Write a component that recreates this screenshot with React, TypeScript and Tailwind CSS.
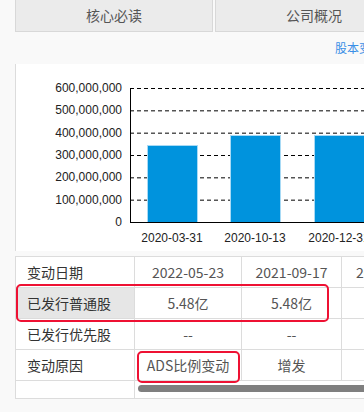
import React from "react";

const yTicks = ["600,000,000", "500,000,000", "400,000,000", "300,000,000", "200,000,000", "100,000,000", "0"];

const bars = [
  { date: "2020-03-31", x: 131, top: 81 },
  { date: "2020-10-13", x: 214, top: 71 },
  { date: "2020-12-31", x: 298, top: 71 },
];

const rows = [
  { label: "变动日期", values: ["2022-05-23", "2021-09-17", "2020-12-31"], head: true },
  { label: "已发行普通股", values: ["5.48亿", "5.48亿", "3.90亿"], mark: true },
  { label: "已发行优先股", values: ["--", "--", "--"] },
  { label: "变动原因", values: ["ADS比例变动", "增发", "回购"] },
];

function ShareChart() {
  const top = 24;
  const bottom = 158;
  const step = (bottom - top) / 6;
  return (
    <svg width="349" height="187" viewBox="0 0 349 187" className="block">
      {yTicks.map((t, i) => {
        const y = top + step * i;
        return (
          <g key={t}>
            <text x="106" y={y + 4} textAnchor="end" fontSize="12" fill="#222" fontFamily="'Liberation Sans', Arial, sans-serif">
              {t}
            </text>
            {i < 6 && <line x1="114" y1={y + 0.5} x2="349" y2={y + 0.5} stroke="#000" strokeWidth="1" strokeDasharray="4 3" />}
          </g>
        );
      })}
      {bars.map((b) => (
        <g key={b.date}>
          <rect x={b.x + 0.5} y={b.top + 0.5} width="50" height={bottom - b.top} fill="#0093dd" stroke="#a8daf5" strokeWidth="1" />
          <text x={b.x + 25} y="178" textAnchor="middle" fontSize="12" fill="#222" fontFamily="'Liberation Sans', Arial, sans-serif">
            {b.date}
          </text>
        </g>
      ))}
      <line x1="114.5" y1={top} x2="114.5" y2={bottom + 1} stroke="#000" strokeWidth="1" />
      <line x1="114" y1={bottom + 0.5} x2="349" y2={bottom + 0.5} stroke="#000" strokeWidth="1" />
    </svg>
  );
}

export default function App() {
  return (
    <div className="w-[364px] h-[412px] overflow-hidden bg-[#f9f9f9] font-['Noto_Sans_CJK_SC','Noto_Sans',sans-serif]">
      {/* tabs */}
      <div className="flex gap-[2px] pl-[15px] whitespace-nowrap">
        <div className="w-[198px] shrink-0 h-[32px] flex items-center justify-center bg-[#ebebeb] border border-t-0 border-[#d8d8d8] text-[14px] text-[#555]">
          核心必读
        </div>
        <div className="w-[198px] shrink-0 h-[32px] flex items-center justify-center bg-[#ebebeb] border border-t-0 border-[#d8d8d8] text-[14px] text-[#555]">
          公司概况
        </div>
      </div>

      <div className="h-[32px] flex items-center pl-[335px] whitespace-nowrap text-[12px] text-[#3a8ee6]">
        股本变动
      </div>

      {/* chart */}
      <div className="ml-[15px] h-[187px] border-l border-[#dcdcdc] bg-white">
        <ShareChart />
      </div>

      {/* table */}
      <div className="relative ml-[15px] mt-[5px] bg-white border-l border-t border-b border-[#dcdcdc] text-[14px]">
        {rows.map((r) => (
          <div key={r.label} className="flex h-[31px] border-b border-[#dcdcdc] whitespace-nowrap">
            <div className={`w-[119px] shrink-0 flex items-center pl-[11px] border-r border-[#dcdcdc] text-[#333] ${r.mark ? "bg-[#e6e6e6]" : ""}`}>
              {r.label}
            </div>
            <div className="w-[107px] shrink-0 flex items-center justify-center border-r border-[#dcdcdc] text-[#555]">
              {r.values[0]}
            </div>
            <div className="w-[100px] shrink-0 flex items-center justify-center border-r border-[#dcdcdc] text-[#555]">
              {r.values[1]}
            </div>
            <div className="w-[100px] shrink-0 flex items-center justify-center text-[#555]">
              {r.values[2]}
            </div>
          </div>
        ))}
        <div className="flex h-[17px]">
          <div className="w-[119px] shrink-0 border-r border-[#dcdcdc]" />
          <div className="flex-1 pt-[4px] pl-[3px]">
            <div className="h-[7px] rounded-l-full bg-[#7f7f7f]" />
          </div>
        </div>

        {/* highlight marks */}
        <div className="absolute left-[0px] top-[27px] w-[313px] h-[38px] rounded-[5px] border-2 border-[#ee1133]" />
        <div className="absolute left-[121px] top-[94px] w-[103px] h-[32px] rounded-[5px] border-2 border-[#ee1133]" />
      </div>
    </div>
  );
}
